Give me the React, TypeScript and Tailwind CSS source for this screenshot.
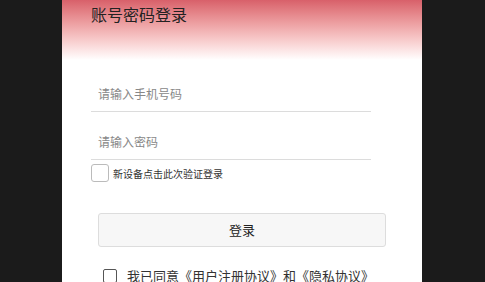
import { useState } from 'react';

const font = { fontFamily: '"Noto Sans CJK SC", "Noto Sans", sans-serif' };

export default function App() {
  const [phone, setPhone] = useState('');
  const [pwd, setPwd] = useState('');
  const [newDevice, setNewDevice] = useState(false);
  const [agree, setAgree] = useState(false);

  return (
    <div className="min-h-screen bg-[#1b1b1b]" style={font}>
      <div className="ml-[62px] w-[360px] min-h-[282px] bg-white">
        <div className="h-[60px] bg-gradient-to-b from-[#d8606a] to-white pl-[29px] pt-[2px]">
          <h1 className="text-[16px] leading-[24px] text-[#222]">账号密码登录</h1>
        </div>

        <div className="pl-[29px] pt-[19px]">
          <div className="w-[280px]">
            <input
              value={phone}
              onChange={(e) => setPhone(e.target.value)}
              placeholder="请输入手机号码"
              className="block w-full h-[33px] border-b border-[#dcdcdc] px-[7px] pb-[3px] text-[12px] text-[#333] placeholder:text-[#888] outline-none"
            />
            <input
              type="password"
              value={pwd}
              onChange={(e) => setPwd(e.target.value)}
              placeholder="请输入密码"
              className="mt-[15px] block w-full h-[33px] border-b border-[#dcdcdc] px-[7px] pb-[3px] text-[12px] text-[#333] placeholder:text-[#888] outline-none"
            />
            <label className="mt-[4px] flex items-center gap-[4px] cursor-pointer">
              <input
                type="checkbox"
                checked={newDevice}
                onChange={(e) => setNewDevice(e.target.checked)}
                className="appearance-none w-[18px] h-[18px] rounded-[3px] border border-[#bbb] bg-white checked:bg-[#d8606a]"
              />
              <span className="text-[10px] text-[#333]">新设备点击此次验证登录</span>
            </label>
          </div>
        </div>

        <div className="pl-[36px] pt-[31px]">
          <button className="w-[288px] h-[34px] rounded-[3px] border border-[#dddddd] bg-[#f7f7f7] pb-[1px] text-[13px] text-[#222]">
            登录
          </button>
        </div>

        <label className="mt-[19px] ml-[41px] flex items-center gap-[10px] cursor-pointer">
          <input
            type="checkbox"
            checked={agree}
            onChange={(e) => setAgree(e.target.checked)}
            className="appearance-none w-[14px] h-[14px] rounded-[2px] border border-[#555] bg-white checked:bg-[#d8606a]"
          />
          <span className="text-[13px] text-[#333]">我已同意《用户注册协议》和《隐私协议》</span>
        </label>
      </div>
    </div>
  );
}
